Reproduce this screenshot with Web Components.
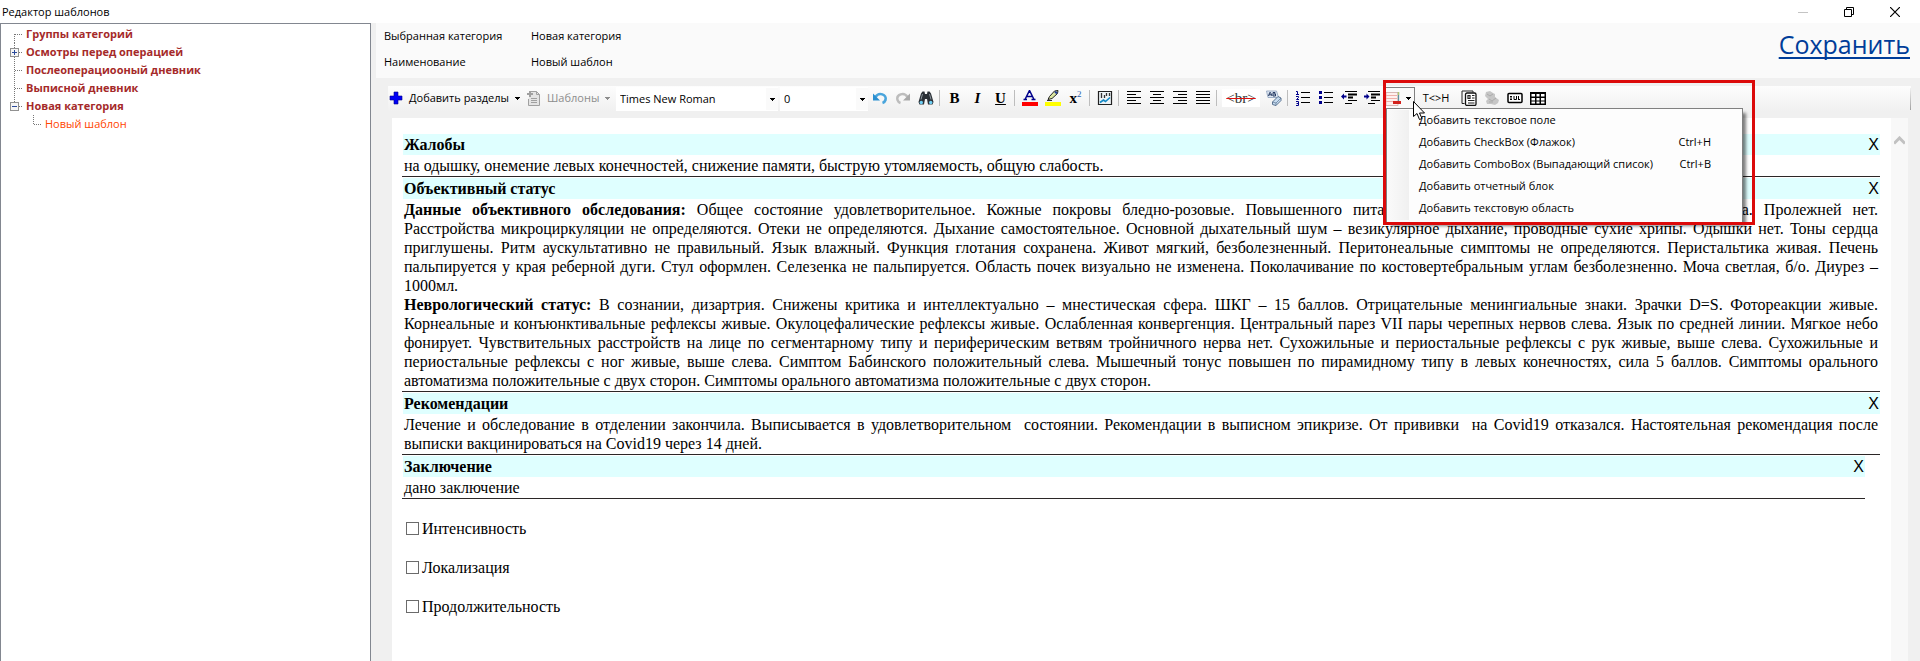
<!DOCTYPE html>
<html lang="ru">
<head>
<meta charset="utf-8">
<title>Редактор шаблонов</title>
<style>
    html, body {
        height: 100%;
        margin: 0;
    }
    body {
        font: 11px/18px "Open Sans", "Noto Sans", sans-serif;
        color: #000;
        background: #fff;
        overflow: hidden;
    }
</style>
</head>
<body>

<editor-window caption="Редактор шаблонов">
    <category-tree slot="side">
        <tree-node label="Группы категорий" place="first"></tree-node>
        <tree-node label="Осмотры перед операцией" toggle="plus"></tree-node>
        <tree-node label="Послеоперациооный дневник"></tree-node>
        <tree-node label="Выписной дневник"></tree-node>
        <tree-node label="Новая категория" toggle="minus" place="last">
            <tree-node label="Новый шаблон" place="last" leaf></tree-node>
        </tree-node>
    </category-tree>

    <template-header category="Новая категория" name="Новый шаблон"></template-header>

    <editor-toolbar></editor-toolbar>

    <document-view>
        <doc-section heading="Жалобы">на одышку, онемение левых конечностей, снижение памяти, быструю утомляемость, общую слабость.</doc-section>
        <doc-section heading="Объективный статус">
            <div><b>Данные объективного обследования:</b> Общее состояние удовлетворительное. Кожные покровы бледно-розовые. Повышенного питания. Видимые слизистые розоватые. Кожа тепла. Пролежней нет. Расстройства&nbsp;микроциркуляции не определяются. Отеки не определяются. Дыхание самостоятельное. Основной дыхательный шум – везикулярное дыхание, проводные сухие хрипы. Одышки нет. Тоны сердца приглушены. Ритм аускультативно не правильный. Язык влажный. Функция глотания сохранена. Живот мягкий, безболезненный. Перитонеальные симптомы не определяются. Перистальтика живая. Печень пальпируется у края реберной дуги. Стул оформлен. Селезенка не пальпируется. Область почек визуально не изменена. Поколачивание по костовертебральным углам безболезненно. Моча светлая, б/о. Диурез – 1000мл.</div>
            <div><b>Неврологический статус:</b> В сознании, дизартрия. Снижены критика и интеллектуально – мнестическая сфера. ШКГ – 15 баллов. Отрицательные менингиальные знаки. Зрачки D=S. Фотореакции живые. Корнеальные и конъюнктивальные рефлексы живые. Окулоцефалические рефлексы живые. Ослабленная конвергенция. Центральный парез VII пары черепных нервов слева. Язык по средней линии. Мягкое небо фонирует. Чувствительных расстройств на лице по сегментарному типу и периферическим ветвям тройничного нерва нет. Сухожильные и периостальные рефлексы с рук живые, выше слева. Сухожильные и периостальные рефлексы с ног живые, выше слева. Симптом Бабинского положительный слева. Мышечный тонус повышен по пирамидному типу в левых конечностях, сила 5 баллов. Симптомы орального автоматизма положительные с двух сторон. Симптомы орального автоматизма положительные с двух сторон.</div>
        </doc-section>
        <doc-section heading="Рекомендации">Лечение и обследование в отделении закончила. Выписывается в удовлетворительном&nbsp; состоянии. Рекомендации в выписном эпикризе. От прививки&nbsp; на Covid19 отказался. Настоятельная рекомендация после выписки вакцинироваться на Covid19 через 14 дней.</doc-section>
        <doc-section heading="Заключение" narrow>дано заключение</doc-section>
        <check-line>Интенсивность</check-line>
        <check-line>Локализация</check-line>
        <check-line>Продолжительность</check-line>
    </document-view>
</editor-window>

<script>
const CARET = '<svg class="caret" width="5" height="3" viewBox="0 0 5 3" shape-rendering="crispEdges"><path d="M0 0h5v1H4v1H3v1H2V2H1V1H0z" fill="currentColor"/></svg>';

// 16x16 toolbar pictures
const ICONS = {
    plus: '<path d="M6 2h4v4h4v4h-4v4H6v-4H2V6h4z" fill="#0000f5" stroke="#00008b" stroke-width=".6"/>',
    sheet: '<path d="M5 1.5h5.500L13.500 4.500V15.500H2.500V9" fill="#e4e4e4" stroke="#a0a0a0"/><path d="M10.500 1.500v3h3M5 8.500h6M5 10.500h6M5 12.500h6" fill="none" stroke="#a0a0a0"/><path d="M4 1v6M1 4h6" stroke="#a0a0a0" stroke-width="2"/>',
    undo: '<path d="M3.500 7C7 1.500 15 4.500 13.500 10c-.5 1.500-1.500 2.500-3 3" fill="none" stroke="#4aa5dc" stroke-width="2.600"/><path d="M1 3.500V10.500H8z" fill="#2b8fd0"/>',
    redo: '<path d="M12.500 7C9 1.500 1 4.500 2.500 10c.5 1.500 1.500 2.500 3 3" fill="none" stroke="#bdbdbd" stroke-width="2.400"/><path d="M15 3.500V10.500H8z" fill="#a9a9a9"/>',
    find: '<path d="M3 3.500 4.500 1.500H6.500L7 4h2l.5-2.500h2L13 3.500l2.500 8.500-1 2.500h-4.500L9 9H7l-1 5.500H1.500L.5 12z" fill="#2b3036"/><path d="M4.500 4 3 9.500M11.500 4l1.500 5.500" stroke="#8b959d"/><circle cx="3.300" cy="12.500" r="1.700" fill="#6fd0f5"/><circle cx="12.700" cy="12.500" r="1.700" fill="#6fd0f5"/>',
    fore: '<path d="M3 9.500 7.500.5 12 9.500M5 6.500h5M1.500 9.500H5M9.500 9.500H13.500" fill="none" stroke="#00008b" stroke-width="1.500"/><path d="M0 12h16v4H0z" fill="#f00"/>',
    marker: '<path d="M3 9.500 4.500 6.500 9.500 1 13 .5 12.500 3.500 7 8.500z" fill="#dce6a0" stroke="#222"/><path d="m10 1.500 2 2" stroke="#223c9b" stroke-width="2"/><path d="M2 10.500h5" stroke="#333"/><path d="M0 12h16v4H0z" fill="#ff0"/>',
    chart: '<path d="M1.500 1.500h13v13h-13z" fill="#eef3f6" stroke="#222" stroke-width="1.200"/><path d="M4.500 3v5M7.500 5v3M9.500 3v3M12.500 3v3" stroke="#333" stroke-width="1.300"/><path d="m3 12.500 3.500-2.500 2 1.500L13 7.500" fill="none" stroke="#1489c5" stroke-width="1.600"/>',
    left: '<path d="M1 1.500h14M1 4.500h9M1 7.500h14M1 10.500h9M1 13.500h14" stroke="#000"/>',
    center: '<path d="M1 1.500h14M4 4.500h8M1 7.500h14M4 10.500h8M1 13.500h14" stroke="#000"/>',
    right: '<path d="M1 1.500h14M6 4.500h9M1 7.500h14M6 10.500h9M1 13.500h14" stroke="#000"/>',
    justify: '<path d="M1 1.500h14M1 4.500h14M1 7.500h14M1 10.500h14M1 13.500h14" stroke="#000"/>',
    eraser: '<path d="M.5 1h10l2 6.500H2z" fill="#dfe8f3" stroke="#8ba0bb" stroke-width=".8"/><path d="m2.500 6 1.200-3.500h.8L6 6M3 4.800h2.300M7 2.500v3.500M7 2.500h2v1.500H7.500M9.500 4v2H7" fill="none" stroke="#253a63"/><path d="m6.500 12 5.500-5.500 3 1.500v2.500L10 15.500 6.500 14.500z" fill="#c7dcf0" stroke="#5a7290"/><path d="m6.500 12 3.500 1 5-5M10 13v2.500" fill="none" stroke="#5a7290" stroke-width=".7"/>',
    ol: '<path d="M6 2.500h9M6 7.500h9M6 12.500h9" stroke="#000"/><path d="M1 1.500h1.500v3M1 4.500h3M1 6.500h2.500v1L1.500 9.500h2.500M1 11.500h2.500v4H1M1.500 13.500h2" fill="none" stroke="#00008b"/>',
    ul: '<path d="M6 2.500h9M6 7.500h9M6 12.500h9" stroke="#000"/><path d="M1 1h3v3H1zM1 6h3v3H1zM1 11h3v3H1z" fill="#00008b"/>',
    outdent: '<path d="M4 1.500h12M7 10.500h9M4 13.500h7" stroke="#000"/><path d="M7 4.500h9M7 7.500h5" stroke="#000" stroke-width="2"/><path d="M0 6.500 3 3.500V5.500H5.500V7.500H3V9.500z" fill="#00008b"/>',
    indent: '<path d="M4 1.500h12M7 10.500h9M4 13.500h7" stroke="#000"/><path d="M7 4.500h9M7 7.500h5" stroke="#000" stroke-width="2"/><path d="M5.500 6.500 2.500 3.500V5.500H0V7.500H2.500V9.500z" fill="#00008b"/>',
    form: '<path d="M0 1.500h12v13H0z" fill="#fff0ee" stroke="#d8b8b5"/><path d="M0 4.500h11M0 7.500h11M0 10.500h7" stroke="#efb0aa"/><path d="M12.500 1v9" stroke="#5f8fa0" stroke-width="1.300"/><path d="M12.500 1v3" stroke="#b2c76c" stroke-width="1.300"/><path d="M7 10h8v3H7z" fill="#d3211c"/>',
    pages: '<path d="M3.500 13.500h-2.500v-12.500h11v1.500" fill="none" stroke="#222"/><rect x="4.500" y="3" width="10.500" height="12.500" rx="1.500" fill="#fff" stroke="#111" stroke-width="1.300"/><path d="M7 5.500h2v3H7zM11 5.500h2.500M11 8h2.500M7 10.500h6.500M7 13h6.500" fill="none" stroke="#222" stroke-width="1.200"/>',
    pieces: '<path d="M2 2l4-1 3 2 2 1v3l4 3-1 3-3 2-4-1H3l-1-3 2-2-3-3z" fill="#c6c6c6"/><path d="m3 4 3 2 3-2M5 9l3 2 4-3M5 12h4" fill="none" stroke="#ababab"/>',
    box: '<rect x="1" y="3.500" width="14" height="9" rx="1" fill="#fff" stroke="#000" stroke-width="1.500"/><path d="M4 6v4M3 6.500h2M3 9.500h2M7 6v3.500h2.500V6M11.500 6v4M11.500 9.500H13" fill="none" stroke="#000"/>',
    grid: '<path d="M0 2h16v13H0z"/><path d="M1.500 4h3.500v2.500H1.500zM6.500 4h3v2.500h-3zM11 4h3.500v2.500H11zM1.500 8h3.500v2.500H1.500zM6.500 8h3v2.500h-3zM11 8h3.500v2.500H11zM1.500 11.500h3.500v2H1.500zM6.500 11.500h3v2h-3zM11 11.500h3.500v2H11z" fill="#fff"/>'
};

function icon(name) {
    return `<svg width="16" height="16" viewBox="0 0 16 16" aria-hidden="true">${ICONS[name]}</svg>`;
}

class EditorWindow extends HTMLElement {
constructor() {
    super();
    this._root = this.attachShadow({mode: 'open'});
    this._root.innerHTML =
    `<style>
        :host {
            display: flex;
            flex-direction: column;
            height: 100vh;
        }
        header {
            display: flex;
            justify-content: space-between;
            height: 23px;
            flex: none;
            padding-left: 2px;
            line-height: 24px;
        }
        nav { display: flex; padding-right: 2px; }
        button {
            width: 46px;
            padding: 0;
            border: 0;
            background: none;
            display: grid;
            place-items: center;
        }
        .body { flex: 1; min-height: 0; display: flex; }
        main {
            flex: 1;
            min-width: 0;
            display: flex;
            flex-direction: column;
            padding-left: 5px;
            background: #f0f0f0;
        }
    </style>
    <header>
        <span>${this.getAttribute('caption')}</span>
        <nav>
            <button aria-label="Свернуть"><svg width="10" height="10"><path d="M0 5.500h10" stroke="#c4c4c4"/></svg></button>
            <button aria-label="Восстановить"><svg width="10" height="10" fill="none" stroke="#000"><path d="M.5 2.500h7v7h-7zM2.500 2.500v-2h7v7h-2"/></svg></button>
            <button aria-label="Закрыть"><svg width="10" height="10"><path d="m0 0 10 10M10 0 0 10" stroke="#000" stroke-width="1.200"/></svg></button>
        </nav>
    </header>
    <div class="body">
        <slot name="side"></slot>
        <main><slot></slot></main>
    </div>`;
}
}

class CategoryTree extends HTMLElement {
constructor() {
    super();
    this._root = this.attachShadow({mode: 'open'});
    this._root.innerHTML =
    `<style>
        :host {
            display: block;
            flex: none;
            box-sizing: border-box;
            width: 371px;
            padding-top: 1px;
            border: 1px solid #828790;
            border-bottom: 0;
            background: #fff;
        }
    </style>
    <slot></slot>`;
}
}

class TreeNode extends HTMLElement {
constructor() {
    super();
    this._root = this.attachShadow({mode: 'open'});
    const place = this.getAttribute('place');
    const toggle = this.getAttribute('toggle');
    const from = place === 'first' ? 9 : 0;
    const to = place === 'last' ? 9 : 18;
    const box = toggle ?
        `<rect x="9.500" y="5.500" width="8" height="8" fill="#f6f6f6" stroke="#919191"/>
        <path d="M11 9.500h5${toggle === 'plus' ? 'M13.500 7v5' : ''}" stroke="#2b4a9b"/>` : '';

    this._root.innerHTML =
    `<style>
        :host { display: block; }
        .row {
            display: flex;
            height: 18px;
            font-weight: 700;
            color: #a52a2a;
            white-space: nowrap;
        }
        :host([leaf]) .row { font-weight: 400; color: #ff4500; }
        .children { padding-left: 19px; }
        svg { flex: none; }
    </style>
    <div class="row">
        <svg width="25" height="18" shape-rendering="crispEdges">
            <path d="M13.500 ${from}V${to}M14 9.500h8" fill="none" stroke="#777" stroke-dasharray="1 1"/>
            ${box}
        </svg>
        <span>${this.getAttribute('label')}</span>
    </div>
    <div class="children"><slot></slot></div>`;
}
}

class TemplateHeader extends HTMLElement {
constructor() {
    super();
    this._root = this.attachShadow({mode: 'open'});
    this._root.innerHTML =
    `<style>
        :host {
            display: flex;
            justify-content: space-between;
            flex: none;
            height: 55px;
            padding: 0 10px 0 8px;
            background: #fafafa;
        }
        dl {
            display: grid;
            grid-template-columns: 147px auto;
            grid-auto-rows: 26px;
            line-height: 26px;
            margin: 0;
        }
        dd { margin: 0; }
        a {
            font-size: 25px;
            line-height: 42px;
            color: #003d99;
            text-decoration-thickness: 2px;
            text-underline-offset: 3px;
            text-decoration-skip-ink: none;
        }
    </style>
    <dl>
        <dt>Выбранная категория</dt><dd>${this.getAttribute('category')}</dd>
        <dt>Наименование</dt><dd>${this.getAttribute('name')}</dd>
    </dl>
    <a href="#save">Сохранить</a>`;
}
}

class ToolButton extends HTMLElement {
constructor() {
    super();
    this._root = this.attachShadow({mode: 'open'});
    const name = this.getAttribute('icon');
    this._root.innerHTML =
    `<style>
        :host { display: block; width: 23px; flex: none; }
        :host([wide]) { width: 42px; }
        :host([menu]) { width: auto; }
        button {
            display: flex;
            align-items: center;
            justify-content: center;
            gap: 5px;
            width: 100%;
            height: 22px;
            padding: 0;
            border: 0;
            background: none;
            font: inherit;
            color: inherit;
            white-space: nowrap;
        }
        :host([menu]) button { justify-content: flex-start; }
        :host([disabled]) button { color: #8d8d8d; }
        .caret { margin-left: 1px; }
    </style>
    <button title="${this.getAttribute('hint') || ''}">${name ? icon(name) : ''}<slot></slot>${this.hasAttribute('menu') ? CARET : ''}</button>`;
}
}

class ToolSelect extends HTMLElement {
constructor() {
    super();
    this._root = this.attachShadow({mode: 'open'});
    this._root.innerHTML =
    `<style>
        :host {
            display: grid;
            grid-template-columns: 1fr 12px;
            align-items: center;
            justify-items: center;
            flex: none;
            height: 24px;
            background: #fff;
        }
        select {
            grid-area: 1 / 1 / 2 / 3;
            width: 100%;
            height: 24px;
            padding: 0 4px;
            border: 0;
            appearance: none;
            background: none;
            font: inherit;
            color: inherit;
        }
        .drop {
            grid-area: 1 / 2;
            display: grid;
            place-items: center;
            width: 12px;
            height: 22px;
            background: #fafafa;
            pointer-events: none;
        }
    </style>
    <select aria-label="${this.getAttribute('hint')}"><option>${this.getAttribute('value')}</option></select>
    <span class="drop">${CARET}</span>`;
}
}

// Button with the opened list of fields under it
class InsertMenu extends HTMLElement {
constructor() {
    super();
    this._root = this.attachShadow({mode: 'open'});
    const items = [
        ['Добавить текстовое поле', ''],
        ['Добавить CheckBox (Флажок)', 'Ctrl+H'],
        ['Добавить ComboBox (Выпадающий список)', 'Ctrl+B'],
        ['Добавить отчетный блок', ''],
        ['Добавить текстовую область', '']
    ];
    this._root.innerHTML =
    `<style>
        :host {
            display: block;
            position: relative;
            flex: none;
            width: 32px;
            color: #000;
        }
        .open {
            display: flex;
            align-items: center;
            gap: 4px;
            width: 32px;
            height: 22px;
            padding: 0 0 0 2px;
            border: 1px solid #808080;
            border-bottom: 0;
            background: #fafafa;
        }
        .list {
            position: absolute;
            z-index: 2;
            top: 21px;
            left: 3px;
            width: 357px;
            box-sizing: border-box;
            margin: 0;
            padding: 2px 0 1px 1px;
            list-style: none;
            border: 1px solid #808080;
            background: linear-gradient(90deg, #fafafa, #f0f0f0) 1px 1px / 21px 110px no-repeat #fdfdfd;
            box-shadow: 4px 4px 3px -1px rgba(0, 0, 0, .5);
        }
        .list button {
            display: flex;
            justify-content: space-between;
            width: 100%;
            height: 22px;
            padding: 0 31px;
            border: 0;
            background: none;
            font: inherit;
            color: inherit;
            white-space: nowrap;
        }
        .frame {
            position: absolute;
            z-index: 3;
            top: -7px;
            left: 0;
            width: 372px;
            height: 145px;
            box-sizing: border-box;
            border: 3px solid #dc0a0a;
            pointer-events: none;
        }
        .pointer {
            position: absolute;
            z-index: 4;
            top: 14px;
            left: 30px;
        }
    </style>
    <button class="open" aria-label="Добавить элемент">${icon('form')}${CARET}</button>
    <ul class="list">
        ${items.map(([text, key]) => `<li><button><span>${text}</span><span>${key}</span></button></li>`).join('')}
    </ul>
    <div class="frame"></div>
    <svg class="pointer" width="13" height="20" viewBox="0 0 13 20"><path d="M.5.5V15.500l3.500-3 2.500 6 2.500-1-2.500-5.500h5z" fill="#fff" stroke="#000"/></svg>`;
}
}

class EditorToolbar extends HTMLElement {
constructor() {
    super();
    this._root = this.attachShadow({mode: 'open'});
    this._root.innerHTML =
    `<style>
        :host {
            display: flex;
            flex: none;
            height: 32px;
            box-sizing: border-box;
            margin: 8px 9px 0 12px;
            padding-top: 1px;
            background: linear-gradient(#fdfdfd, #f0f0f0 26px);
        }
        .add { width: 138px; }
        .templates { width: 90px; }
        .font { width: 162px; margin-right: 2px; }
        .size { width: 88px; }
        i.sep {
            flex: none;
            width: 1px;
            height: 16px;
            margin: 3px 3px 0 2px;
            background: #bdbdbd;
        }
        b, em, u {
            font: 700 15px/20px "Liberation Serif", serif;
        }
        em { font-style: italic; }
        sup { font: 9px/9px "Liberation Serif", serif; color: #2460b0; vertical-align: 6px; }
        s {
            width: 38px;
            height: 18px;
            font: 15px/18px "Liberation Serif", serif;
            color: #333;
            background: #fff;
            text-align: center;
            text-decoration: line-through #e01010 1px;
        }
        .end {
            width: 1px;
            height: 22px;
            margin: 1px 0 0 auto;
            background: linear-gradient(#f0f0f0, #a0a0a0);
        }
    </style>
    <tool-button class="add" menu icon="plus">Добавить разделы</tool-button>
    <tool-button class="templates" menu disabled icon="sheet">Шаблоны</tool-button>
    <tool-select class="font" hint="Шрифт" value="Times New Roman"></tool-select>
    <tool-select class="size" hint="Размер" value="0"></tool-select>
    <tool-button icon="undo" hint="Отменить"></tool-button>
    <tool-button icon="redo" hint="Повторить"></tool-button>
    <tool-button icon="find" hint="Найти"></tool-button>
    <i class="sep"></i>
    <tool-button><b>B</b></tool-button>
    <tool-button><em>I</em></tool-button>
    <tool-button><u>U</u></tool-button>
    <i class="sep"></i>
    <tool-button icon="fore" hint="Цвет текста"></tool-button>
    <tool-button icon="marker" hint="Цвет фона"></tool-button>
    <tool-button><b>x<sup>2</sup></b></tool-button>
    <i class="sep"></i>
    <tool-button icon="chart" hint="Рисунок"></tool-button>
    <i class="sep"></i>
    <tool-button icon="left" hint="По левому краю"></tool-button>
    <tool-button icon="center" hint="По центру"></tool-button>
    <tool-button icon="right" hint="По правому краю"></tool-button>
    <tool-button icon="justify" hint="По ширине"></tool-button>
    <i class="sep"></i>
    <tool-button wide><s>&lt;br&gt;</s></tool-button>
    <tool-button icon="eraser" hint="Очистить формат"></tool-button>
    <i class="sep"></i>
    <tool-button icon="ol" hint="Нумерация"></tool-button>
    <tool-button icon="ul" hint="Маркеры"></tool-button>
    <tool-button icon="outdent" hint="Уменьшить отступ"></tool-button>
    <tool-button icon="indent" hint="Увеличить отступ"></tool-button>
    <insert-menu></insert-menu>
    <tool-button wide>T&lt;&gt;H</tool-button>
    <tool-button icon="pages" hint="Копировать"></tool-button>
    <tool-button icon="pieces" hint="Блоки"></tool-button>
    <tool-button icon="box" hint="Поле"></tool-button>
    <tool-button icon="grid" hint="Таблица"></tool-button>
    <span class="end"></span>`;
}
}

class DocumentView extends HTMLElement {
constructor() {
    super();
    this._root = this.attachShadow({mode: 'open'});
    this._root.innerHTML =
    `<style>
        :host {
            display: flex;
            flex: 1;
            min-height: 0;
            margin: 0 12px 0 16px;
            background: #fff;
            font: 16px/19px "Liberation Serif", serif;
        }
        article {
            flex: 1;
            min-width: 0;
            padding: 16px 11px 0 10px;
            overflow: hidden;
        }
        .scroll {
            flex: none;
            width: 17px;
            padding-top: 17px;
            background: #f8f8f8;
            text-align: center;
            line-height: 9px;
        }
    </style>
    <article><slot></slot></article>
    <div class="scroll"><svg width="11" height="9"><path d="m0 7.500 5.500-5.500 5.500 5.500" fill="none" stroke="#c1c1c1" stroke-width="3"/></svg></div>`;
}
}

class DocSection extends HTMLElement {
constructor() {
    super();
    this._root = this.attachShadow({mode: 'open'});
    this._root.innerHTML =
    `<style>
        :host {
            display: block;
            margin-bottom: 1px;
            border-bottom: 1px solid #2b2727;
        }
        :host([narrow]) { margin-right: 15px; }
        header {
            display: flex;
            justify-content: space-between;
            height: 21px;
            margin-left: 1px;
            padding: 0 1px;
            background: #dfffff;
        }
        h2 { margin: 0; font: 700 16px/22px "Liberation Serif", serif; }
        button {
            padding: 0;
            border: 0;
            background: none;
            font: 16px/22px "Liberation Sans", sans-serif;
            color: #000;
        }
        .text { padding: 1px 2px; text-align: justify; }
    </style>
    <header><h2>${this.getAttribute('heading')}</h2><button aria-label="Удалить раздел">X</button></header>
    <div class="text"><slot></slot></div>`;
}
}

class CheckLine extends HTMLElement {
constructor() {
    super();
    this._root = this.attachShadow({mode: 'open'});
    this._root.innerHTML =
    `<style>
        :host { display: block; padding: 19px 0 1px 4px; }
        label { display: flex; align-items: center; gap: 3px; }
        input {
            appearance: none;
            width: 13px;
            height: 13px;
            margin: 0;
            border: 1px solid #6b6b6b;
            background: #fff;
        }
    </style>
    <label><input type="checkbox"><slot></slot></label>`;
}
}

window.customElements.define('editor-window', EditorWindow);
window.customElements.define('category-tree', CategoryTree);
window.customElements.define('tree-node', TreeNode);
window.customElements.define('template-header', TemplateHeader);
window.customElements.define('tool-button', ToolButton);
window.customElements.define('tool-select', ToolSelect);
window.customElements.define('insert-menu', InsertMenu);
window.customElements.define('editor-toolbar', EditorToolbar);
window.customElements.define('document-view', DocumentView);
window.customElements.define('doc-section', DocSection);
window.customElements.define('check-line', CheckLine);
</script>
</body>
</html>
